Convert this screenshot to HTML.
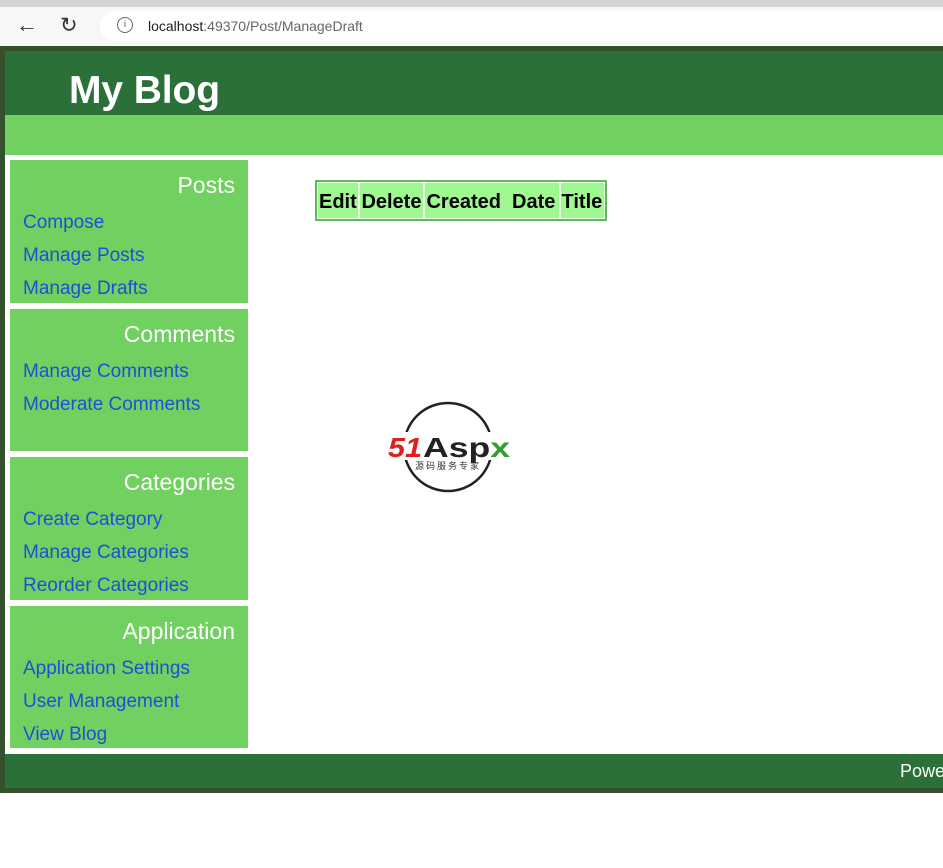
<!DOCTYPE html>
<html><head><style>
body{margin:0;width:943px;height:868px;overflow:hidden;background:#fff;font-family:"Liberation Sans",sans-serif;position:relative}
.a{position:absolute}
.tabs{left:0;top:0;width:943px;height:7px;background:#d4d4d4}
.bar{left:0;top:7px;width:943px;height:38px;background:#f7f7f7}
.url{left:100px;top:11px;width:860px;height:30px;background:#fff;border-radius:15px}
.panel{left:10px;width:238px;background:#70d060}
.panel h3{margin:0;font-weight:normal;color:#fff;font-size:23px;text-align:right;padding:12px 13px 7px 0}
.panel a{display:block;color:#1f4fd8;text-decoration:none;font-size:19px;padding-left:13px;height:33px;line-height:33px}
td{background:#a0f890;font-weight:bold;font-size:20px;padding:6px 1px 2px;border:1px solid #e8ffe0;white-space:nowrap}
</style></head><body>
<div class="a tabs"></div><div class="a bar"></div><div class="a url"></div>
<div class="a" style="left:16px;top:12px;font-size:22px;color:#333">&#8592;</div>
<div class="a" style="left:60px;top:13px;font-size:21px;color:#333">&#8635;</div>
<div class="a" style="left:117px;top:17px;width:14px;height:14px;border:1.5px solid #666;border-radius:50%;font-size:10px;text-align:center;line-height:14px;color:#666">i</div>
<div class="a" style="left:148px;top:18px;font-size:14px;color:#222">localhost<span style="color:#666">:49370/Post/ManageDraft</span></div>
<div class="a" style="left:0;top:46px;width:943px;height:747px;background:#34502c"></div>
<div class="a" style="left:5px;top:51px;width:938px;height:64px;background:#2a7038"></div>
<div class="a" style="left:69px;top:69px;color:#fff;font-weight:bold;font-size:39px;letter-spacing:-0.1px">My Blog</div>
<div class="a" style="left:5px;top:115px;width:938px;height:40px;background:#70d060"></div>
<div class="a" style="left:5px;top:155px;width:938px;height:599px;background:#fff"></div>
<div class="a" style="left:5px;top:754px;width:938px;height:34px;background:#2a7038"></div>
<div class="a" style="left:900px;top:761px;color:#fff;font-size:18px">Powe</div>
<div class="a panel" style="top:160px;height:143px"><h3>Posts</h3><a>Compose</a><a>Manage Posts</a><a>Manage Drafts</a></div>
<div class="a panel" style="top:309px;height:142px"><h3>Comments</h3><a>Manage Comments</a><a>Moderate Comments</a></div>
<div class="a panel" style="top:457px;height:143px"><h3>Categories</h3><a>Create Category</a><a>Manage Categories</a><a>Reorder Categories</a></div>
<div class="a panel" style="top:606px;height:142px"><h3>Application</h3><a>Application Settings</a><a>User Management</a><a>View Blog</a></div>
<table class="a" style="left:315px;top:180px;border:2px solid #60b860;border-collapse:separate;border-spacing:0;height:41px;width:292px"><tr><td>Edit</td><td>Delete</td><td>Created&nbsp; Date</td><td>Title</td></tr></table>
<svg class="a" style="left:385px;top:400px" width="130" height="96">
<circle cx="63" cy="47" r="44" fill="none" stroke="#222" stroke-width="2.5"/>
<rect x="0" y="32" width="130" height="28" fill="#fff"/>
<text x="3" y="57" font-size="28" font-weight="bold" font-style="italic" fill="#e02020" font-family="Liberation Sans" textLength="34" lengthAdjust="spacingAndGlyphs">51</text>
<text x="38" y="57" font-size="28" font-weight="bold" fill="#222" font-family="Liberation Sans" textLength="87" lengthAdjust="spacingAndGlyphs">Asp<tspan fill="#30a030">x</tspan></text>
<text x="30" y="69" font-size="9" fill="#333" font-family="Noto Sans CJK SC,sans-serif" textLength="64">源码服务专家</text>
</svg>
</body></html>
